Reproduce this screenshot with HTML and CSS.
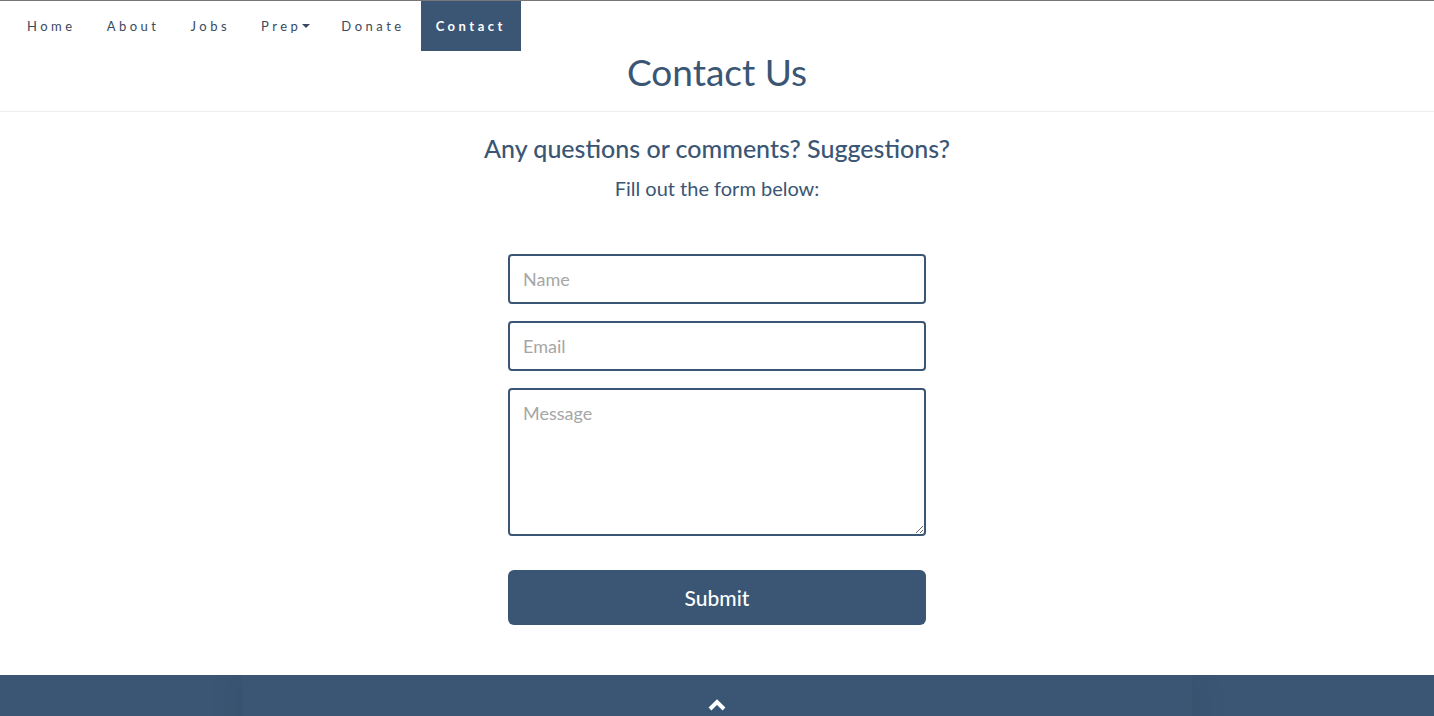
FILE: index.html
```html
<!DOCTYPE html>
<html>
<head>
<meta charset="utf-8">
<link rel="stylesheet" href="styles.css">
</head>
<body>
<nav class="topnav">
  <a class="nav-link" href="#">Home</a>
  <a class="nav-link" href="#">About</a>
  <a class="nav-link" href="#">Jobs</a>
  <a class="nav-link" href="#">Prep<span class="caret"></span></a>
  <a class="nav-link" href="#">Donate</a>
  <a class="nav-link active" href="#">Contact</a>
</nav>
<header class="page-head">
  <h1 class="page-title">Contact Us</h1>
</header>
<main class="content">
  <h2 class="lead">Any questions or comments? Suggestions?</h2>
  <p class="sub">Fill out the form below:</p>
  <form class="contact-form">
    <input class="field" type="text" placeholder="Name">
    <input class="field" type="email" placeholder="Email">
    <textarea class="field area" placeholder="Message"></textarea>
    <button class="submit" type="button">Submit</button>
  </form>
</main>
<footer class="footer">
  <div class="footer-inner">
    <svg class="chev" width="18" height="12" viewBox="0 0 18 12"><path d="M2 10 L9 3 L16 10" fill="none" stroke="#fff" stroke-width="4"/></svg>
  </div>
</footer>
</body>
</html>
```
FILE: styles.css
```css
* { box-sizing: border-box; }
html, body { margin: 0; padding: 0; }
body {
  font-family: Lato, "Noto Sans", sans-serif;
  color: #3a5674;
  background: #fff;
  border-top: 1px solid #777;
  overflow: hidden;
  height: 716px;
}
.topnav {
  display: flex;
  height: 50px;
  padding-left: 12px;
}
.nav-link {
  display: flex;
  align-items: center;
  padding: 0 15px;
  margin-right: 1px;
  font-size: 13px;
  letter-spacing: 3.5px;
  color: #3a4a5e;
  text-decoration: none;
}
.nav-link.active {
  background: #3a5674;
  color: #fff;
  font-weight: 700;
}
.caret {
  display: inline-block;
  width: 0; height: 0;
  border-left: 4px solid transparent;
  border-right: 4px solid transparent;
  border-top: 4px solid #3a4a5e;
  margin-left: 1px;
}
.page-head {
  border-bottom: 1px solid #eee;
  height: 62px;
  margin-top: -1px;
}
.page-title {
  margin: 0;
  text-align: center;
  font-weight: 400;
  font-size: 37px;
  line-height: 44px;
  color: #3a5674;
}
.content {
  display: flex;
  flex-direction: column;
  align-items: center;
  padding-top: 19px;
}
.lead {
  margin: 0;
  font-size: 25px;
  font-weight: 500;
  line-height: 34px;
  color: #3a5674;
}
.sub {
  margin: 11px 0 0;
  font-size: 20px;
  line-height: 24px;
  color: #3a5674;
}
.contact-form {
  width: 418px;
  margin-top: 54px;
  display: flex;
  flex-direction: column;
  gap: 17px;
}
.field {
  display: block;
  width: 100%;
  height: 50px;
  border: 2px solid #3a5674;
  border-radius: 4px;
  padding: 0 13px;
  font-family: Lato, "Noto Sans", sans-serif;
  font-size: 18px;
  color: #333;
  outline: none;
}
.field::placeholder { color: #a6a6a6; }
.area {
  height: 148px;
  padding-top: 12px;
  resize: vertical;
}
.submit {
  margin-top: 17px;
  height: 55px;
  width: 100%;
  border: none;
  border-radius: 6px;
  background: #3a5674;
  color: #fff;
  font-family: Lato, "Noto Sans", sans-serif;
  font-size: 21px;
  font-weight: 500;
}
.footer {
  margin-top: 50px;
  height: 60px;
  background: #3a5674;
  display: flex;
  justify-content: center;
  overflow: hidden;
}
.footer-inner {
  width: 950px;
  height: 100%;
  display: flex;
  justify-content: center;
  padding-top: 24px;
  box-shadow: 0 0 40px rgba(0,0,0,0.08);
}
.chev { display: block; }
```
